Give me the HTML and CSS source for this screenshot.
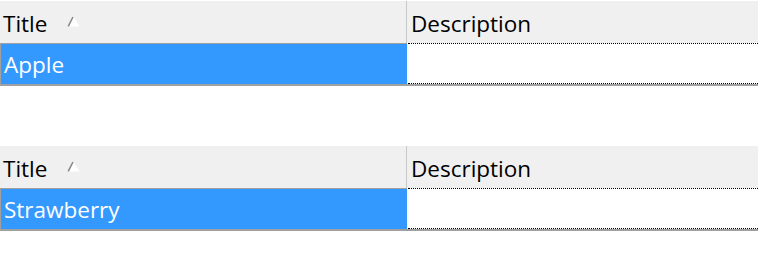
FILE: index.html
```html
<!DOCTYPE html>
<html>
<head>
<meta charset="utf-8">
<link rel="stylesheet" href="styles.css">
</head>
<body>
<div class="page">
  <div class="list">
    <div class="head">
      <div class="hcell first">Title
        <svg class="sort" width="13" height="11" viewBox="0 0 13 11"><polygon points="6.5,0.5 12.5,10.5 0.5,10.5" fill="#ffffff"/><line x1="6" y1="1" x2="1.2" y2="10.3" stroke="#8a8a8a" stroke-width="1.6"/></svg>
      </div>
      <div class="hcell">Description</div>
    </div>
    <div class="row">
      <div class="cell sel">Apple</div>
      <div class="cell rest"></div>
    </div>
  </div>
  <div class="list">
    <div class="head">
      <div class="hcell first">Title
        <svg class="sort" width="13" height="11" viewBox="0 0 13 11"><polygon points="6.5,0.5 12.5,10.5 0.5,10.5" fill="#ffffff"/><line x1="6" y1="1" x2="1.2" y2="10.3" stroke="#8a8a8a" stroke-width="1.6"/></svg>
      </div>
      <div class="hcell">Description</div>
    </div>
    <div class="row">
      <div class="cell sel">Strawberry</div>
      <div class="cell rest"></div>
    </div>
  </div>
</div>
</body>
</html>
```
FILE: styles.css
```css
html, body {
  margin: 0;
  padding: 0;
  background: #ffffff;
}
.page {
  display: flex;
  flex-direction: column;
  gap: 60px;
  padding-top: 1px;
  font-family: "Open Sans", "Noto Sans", sans-serif;
  font-size: 22.5px;
}
.list {
  width: 758px;
  border-bottom: 2px solid #a0a0a0;
}
.head {
  display: grid;
  grid-template-columns: 407px 1fr;
  height: 42px;
  background: #f0f0f0;
  color: #000;
}
.hcell {
  display: flex;
  align-items: center;
  padding-left: 4px;
  padding-top: 2px;
  border-right: 1px solid #c8c8c8;
}
.hcell.first {
  padding-left: 3px;
}
.hcell:last-child {
  border-right: none;
}
.sort {
  margin-left: 20px;
  margin-top: -4px;
}
.row {
  display: grid;
  grid-template-columns: 407px 1fr;
  height: 41px;
}
.cell {
  display: flex;
  align-items: center;
  padding-left: 4px;
}
.sel {
  background: #3399ff;
  color: #ffffff;
  border-top: 1px solid #a0a0a0;
  border-left: 1px solid #a0a0a0;
  padding-left: 3px;
}
.rest {
  border-top: 1px dotted #000;
  border-bottom: 1px dotted #000;
  margin-left: 1px;
}
```
